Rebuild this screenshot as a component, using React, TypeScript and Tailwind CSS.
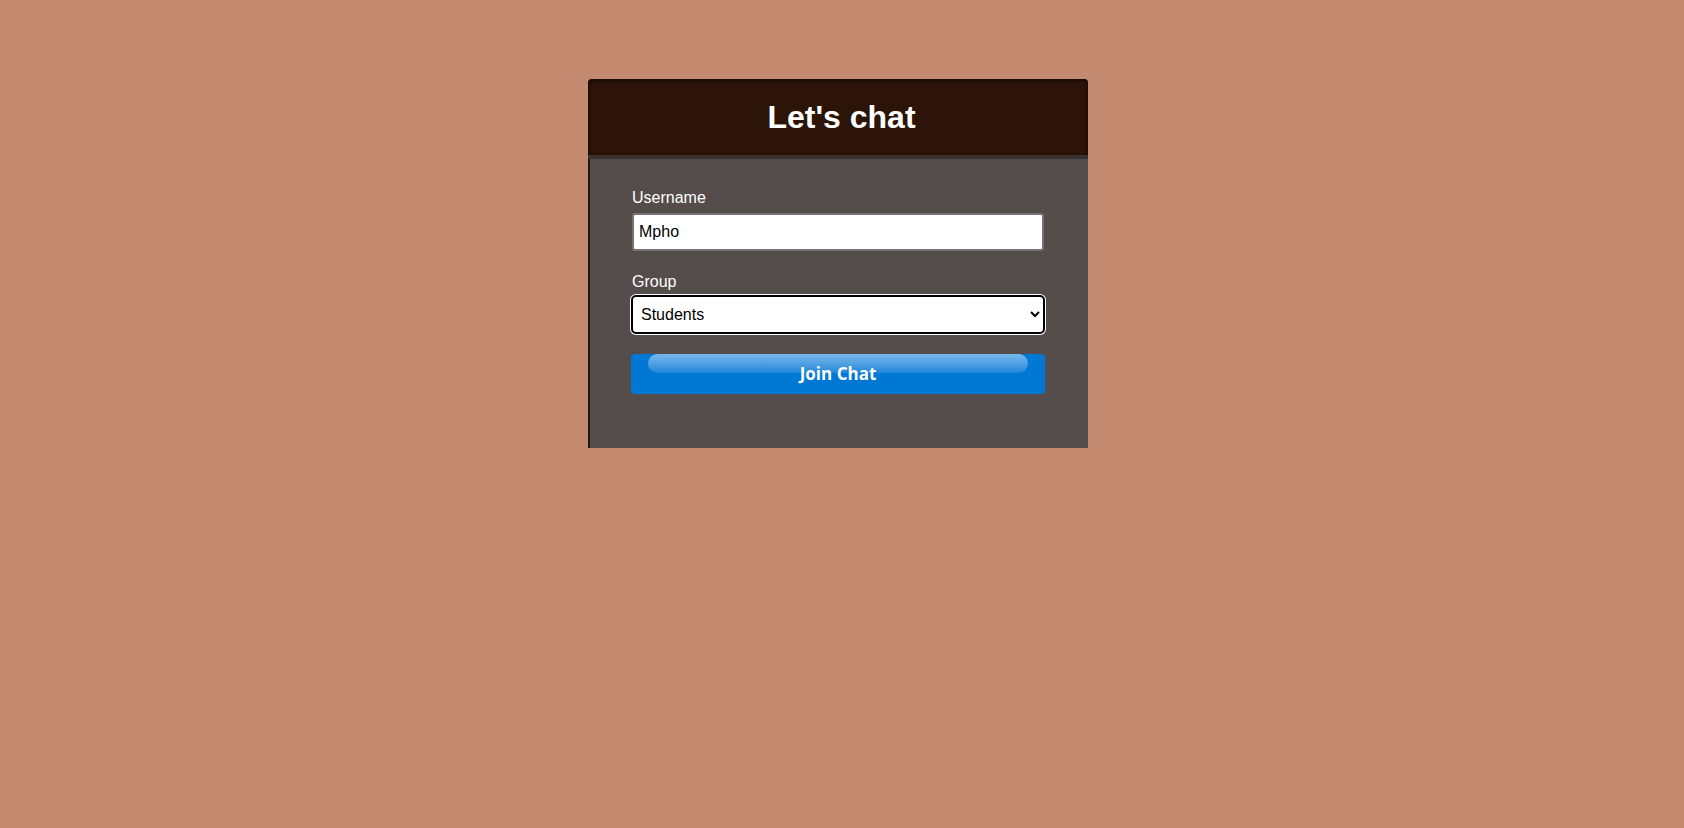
import React from "react";

export default function App() {
  return (
    <div className="min-h-[828px] w-full bg-[#c38a6f] pt-[79px]" style={{ fontFamily: '"Liberation Sans", Arial, sans-serif' }}>
      <div className="ml-[calc(50%-254px)] w-[500px]">
        <div className="h-[80px] rounded-t-[4px] bg-[#2c1508] border-b-[4px] border-[#3a3230] shadow-[inset_0_3px_3px_rgba(0,0,0,0.35),inset_2px_0_2px_rgba(0,0,0,0.25),inset_-2px_0_2px_rgba(0,0,0,0.25)] flex items-center justify-center pl-[7px]">
          <h1 className="text-[32px] font-bold text-white leading-none">Let's chat</h1>
        </div>
        <div className="bg-[#554c4c] border-l-[2px] border-[#1f1a1a] pl-[42px] pr-[44px] pt-[30px] pb-[51px] h-[289px]">
          <label className="block text-white text-[16px] leading-[18px]">Username</label>
          <input
            className="mt-[6px] block w-[412px] h-[38px] bg-white border-[2px] border-[#767272] rounded-[3px] px-[5px] text-[16px] text-black outline-none"
            defaultValue="Mpho"
          />
          <label className="block mt-[22px] text-white text-[16px] leading-[18px]">Group</label>
          <select
            className="mt-[4px] block w-[414px] h-[39px] bg-white border-[2px] border-black rounded-[5px] ring-1 ring-white px-[4px] text-[16px] text-black outline-none -ml-[1px] appearance-auto"
            defaultValue="Students"
          >
            <option>Students</option>
            <option>Teachers</option>
          </select>
          <button className="relative mt-[20px] block w-[414px] h-[40px] -ml-[1px] rounded-[4px] bg-[#0078d4] text-white text-[17px] font-bold overflow-hidden" style={{ fontFamily: '"Open Sans", "Noto Sans", sans-serif' }}>
            <span className="absolute left-[17px] right-[17px] top-0 h-[19px] rounded-[10px] bg-gradient-to-b from-[#78b9ec] to-[#1c86d8]" />
            <span className="relative">Join Chat</span>
          </button>
        </div>
      </div>
    </div>
  );
}
